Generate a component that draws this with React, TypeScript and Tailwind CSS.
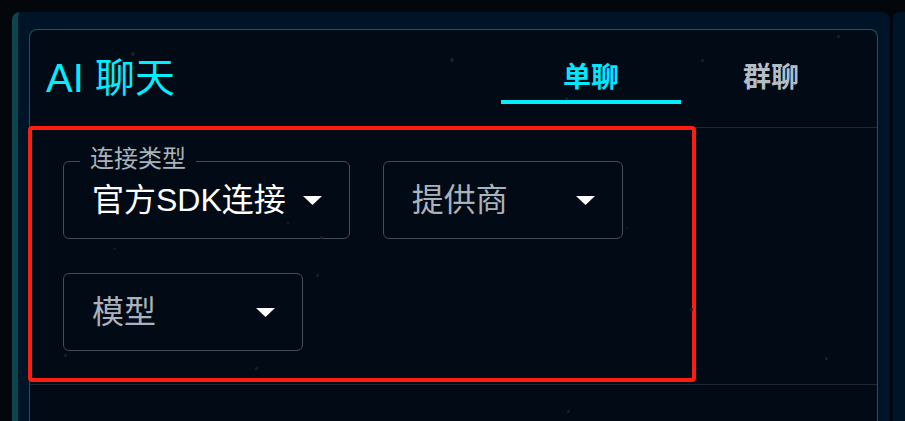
import React from "react";

const font = { fontFamily: '"Liberation Sans", "Noto Sans CJK SC", sans-serif' };

const dots: [number, number, number][] = [
  [131, 52, 4],
  [450, 58, 4],
  [701, 59, 3],
  [837, 35, 3],
  [565, 97, 3],
  [287, 222, 2],
  [320, 236, 3],
  [114, 248, 2],
  [316, 274, 3],
  [64, 354, 3],
  [255, 367, 3],
  [626, 227, 2],
  [690, 308, 3],
  [825, 357, 3],
  [567, 410, 3],
];

function Caret() {
  return (
    <svg width="19" height="9" viewBox="0 0 19 9" className="shrink-0">
      <path d="M0 0 L19 0 L9.5 9 Z" fill="#ffffff" />
    </svg>
  );
}

type SelectProps = {
  label?: string;
  value?: string;
  placeholder: string;
};

function FieldSelect({ label, value, placeholder }: SelectProps) {
  return (
    <div className="relative flex h-[78px] min-w-[240px] items-center rounded-[6px] border border-[#454e57] pl-[28px] pr-[27px]">
      {label ? (
        <span className="absolute left-[16px] top-[-15px] bg-[#010a15] px-[10px] text-[24px] leading-[24px] text-[#aab2ba]">
          {label}
        </span>
      ) : null}
      <span className={`whitespace-nowrap text-[32px] leading-[40px] ${value ? "text-white" : "text-[#aab3bc]"}`}>
        {value ?? placeholder}
      </span>
      <div className="min-w-[17px] flex-1" />
      <Caret />
    </div>
  );
}

export default function App() {
  return (
    <div className="relative flex h-[421px] w-[905px] gap-[3px] overflow-hidden bg-[#03070b] pl-3 pt-3" style={font}>
      <div className="flex w-[878px] shrink-0 flex-col rounded-t-[8px] border-l-[6px] border-[#0a4650] bg-[#001428] pl-[11px] pr-[12px] pt-[17px]">
        <div className="flex flex-1 flex-col rounded-t-[8px] border border-b-0 border-[#0f5b5f] bg-[#010a15]">
          {/* header */}
          <div className="flex h-[98px] items-start justify-between border-b border-[#1c2833] pl-[16px] pr-[16px]">
            <h1 className="mt-[24px] text-[40px] font-normal leading-[48px] text-[#00eeff]">AI 聊天</h1>
            <div className="mt-[30px] flex">
              <div className="flex w-[180px] flex-col items-center">
                <span className="text-[28px] font-semibold leading-[36px] text-[#00e8ff]">单聊</span>
                <div className="mt-[4px] h-[4px] w-full bg-[#00f0ff]" />
              </div>
              <div className="flex w-[180px] flex-col items-center">
                <span className="text-[28px] font-semibold leading-[36px] text-[#b4bcc4]">群聊</span>
              </div>
            </div>
          </div>

          {/* form */}
          <div className="border-b border-[#1c2833]">
            <div className="relative w-[666px]">
              <div className="flex flex-wrap gap-x-[33px] gap-y-[34px] px-[33px] py-[33px]">
                <FieldSelect label="连接类型" value="官方SDK连接" placeholder="" />
                <FieldSelect placeholder="提供商" />
                <FieldSelect placeholder="模型" />
              </div>
              <div className="pointer-events-none absolute left-[-2px] top-[-2px] h-[256px] w-[668px] rounded-[4px] border-4 border-[#ff1d12]" />
            </div>
          </div>

          <div className="flex-1" />
        </div>
      </div>
      <div className="flex-1 rounded-tl-[8px] bg-[#001428]" />

      {dots.map(([x, y, s], i) => (
        <span
          key={i}
          className="pointer-events-none absolute rounded-full bg-[#17212c]"
          style={{ left: x, top: y, width: s, height: s }}
        />
      ))}
    </div>
  );
}
